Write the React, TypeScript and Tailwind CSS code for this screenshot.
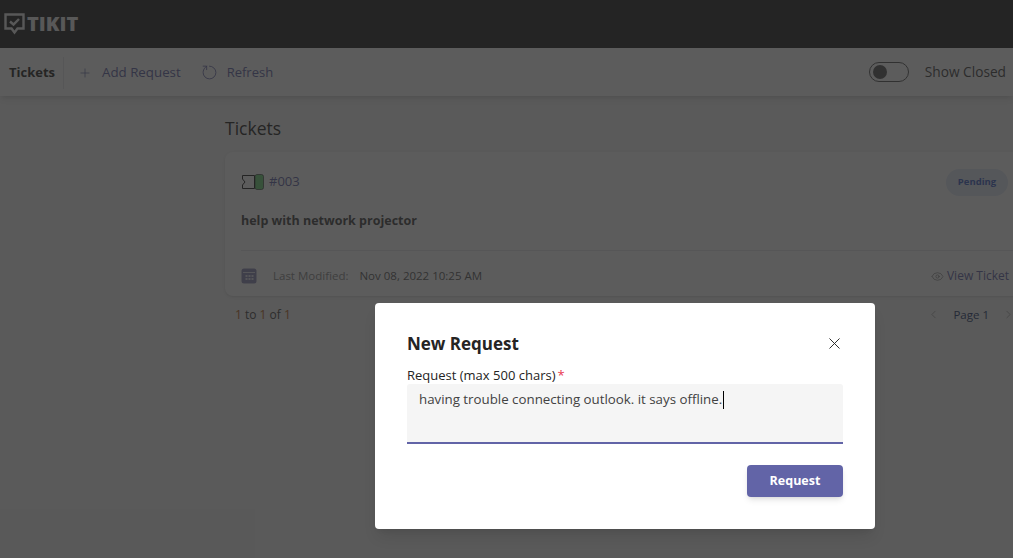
import { ChevronLeft, ChevronRight, Eye, Plus, RotateCw, X } from "lucide-react";

const font = "font-['Open_Sans','Noto_Sans',sans-serif]";

const Logo = () => (
  <svg width="21" height="22" viewBox="0 0 21 22" fill="none" className="shrink-0 text-[#f0f0f0]">
    <path d="M1.500 1.500h18v14h-6l-3 4-3-4h-6z" stroke="currentColor" strokeWidth="2.400" />
    <path d="M6 8.500l3.500 3 5.500-5.500" stroke="currentColor" strokeWidth="2.400" />
  </svg>
);

const TicketIcon = () => (
  <svg width="24" height="18" viewBox="0 0 24 18" fill="none">
    <path d="M1.500 2.500h12v13h-12v-3.500l2.500-3-2.500-3z" stroke="#222" strokeWidth="1" />
    <rect x="14" y="1.500" width="8.500" height="15" rx="2" fill="#6cd37a" stroke="#222" strokeWidth="0.600" />
  </svg>
);

const CalendarIcon = () => (
  <svg width="16" height="16" viewBox="0 0 16 16">
    <rect x="0.500" y="0.500" width="15" height="15" rx="2.500" fill="#8d8bb8" />
    <path d="M2 4.500h12" stroke="#e4e4ee" strokeWidth="1" />
    <path d="M4.500 7h2v2h-2zM7.500 7h2v2h-2zM10.500 7h2v2h-2zM4.500 10h2v2h-2zM7.500 10h2v2h-2zM10.500 10h2v2h-2z" fill="#e4e4ee" />
  </svg>
);

export default function App() {
  return (
    <div className={`relative h-screen w-screen overflow-hidden bg-[#f5f5f5] ${font}`}>
      <header className="flex h-12 items-center bg-[#222222] pb-[1px] pl-[4px] text-[#f0f0f0]">
        <Logo />
        <span className="ml-[2px] text-[20px] font-extrabold leading-none">TIKIT</span>
      </header>

      <nav className="flex h-12 items-center bg-white pr-[7px] pt-[1px] text-[13px] shadow-md">
        <div className="flex h-8 items-center border-r border-gray-200 pl-[9px] pr-2 font-bold text-[#252423]">Tickets</div>
        <button className="ml-3.5 flex items-center gap-[10px] text-[13.300px] text-[#6264a7]">
          <Plus size={14} strokeWidth={1.200} />
          Add Request
        </button>
        <button className="ml-5 flex items-center gap-[9px] text-[#6264a7]">
          <RotateCw size={17} strokeWidth={1.200} className="-rotate-90" />
          Refresh
        </button>
        <div className="ml-auto flex items-center gap-4">
          <div className="flex h-5 w-10 items-center rounded-full border border-[#555] px-[3px]">
            <div className="h-3.5 w-3.5 rounded-full bg-[#555]" />
          </div>
          <span className="text-[13.700px] text-[#424242]">Show Closed</span>
        </div>
      </nav>

      <main className="pl-[225px] pt-[21px]">
        <h1 className="text-[17.500px] leading-[23px] text-[#252423]">Tickets</h1>
        <section className="mt-[12px] w-[816px] rounded-lg bg-white px-4 shadow-sm">
          <div className="flex h-[60px] items-center">
            <TicketIcon />
            <span className="ml-1 text-[13px] text-[#6264a7]">#003</span>
            <span className="ml-auto mr-[17px] flex h-[27px] w-[62px] items-center justify-center rounded-full bg-[#e1e9f8] text-[9.500px] font-bold text-[#3f62c4]">
              Pending
            </span>
          </div>
          <p className="text-[12.500px] font-bold leading-[18px] text-[#424242]">help with network projector</p>
          <div className="mt-[20px] border-t border-gray-200" />
          <div className="flex h-[45px] items-center pt-[5px] text-[11.500px]">
            <CalendarIcon />
            <span className="ml-[16px] text-[#8a8a8a]">Last Modified:</span>
            <span className="ml-[11px] text-[#5a5a5a]">Nov 08, 2022 10:25 AM</span>
            <span className="ml-auto mr-[16px] flex items-center gap-[3px] text-xs text-[#6264a7]">
              <Eye size={13} strokeWidth={1.200} className="text-[#777]" />
              View Ticket
            </span>
          </div>
        </section>
        <div className="mt-[11px] flex h-4 w-[816px] items-center text-xs text-[#444]">
          <span className="ml-[10px]"><b className="font-normal text-[#b5651d]">1</b> to <b className="font-normal text-[#b5651d]">1</b> of <b className="font-normal text-[#b5651d]">1</b></span>
          <span className="ml-auto mr-[26px] flex items-center text-[11.500px] text-[#23386b]">
            <ChevronLeft size={13} strokeWidth={1} className="text-[#777]" />
            <span className="mx-[13px]">Page 1</span>
            <ChevronRight size={13} strokeWidth={1} className="text-[#777]" />
          </span>
        </div>
      </main>

      <div className="absolute inset-0 bg-[#252525]/75 pl-[375px] pt-[303px]">
        <div className="h-[226px] w-[500px] rounded bg-white px-8 pt-[28px] shadow-lg">
          <div className="flex h-[26px] items-center justify-between">
            <h2 className="text-[17px] font-bold text-[#252423]">New Request</h2>
            <X size={19} strokeWidth={1.200} className="mr-[-1px] -mt-[2px] text-[#252423]" />
          </div>
          <label className="mt-[9px] block text-[13px] leading-[18px] text-[#252423]">
            Request (max 500 chars)<span className="ml-0.5 text-[#e8384f]">*</span>
          </label>
          <div className="h-[60px] rounded-t-[3px] border-b-2 border-[#6264a7] bg-[#f5f5f5] px-3 pt-[5px] text-[13.300px] leading-[20px] text-[#424242]">
            having trouble connecting outlook. it says offline.
            <span className="ml-px inline-block h-[18px] w-px bg-black align-middle" />
          </div>
          <div className="mt-[21px] flex justify-end">
            <button className="h-8 w-24 rounded bg-[#6264a7] pt-px text-[12.500px] font-bold text-white shadow-md">Request</button>
          </div>
        </div>
      </div>
    </div>
  );
}
